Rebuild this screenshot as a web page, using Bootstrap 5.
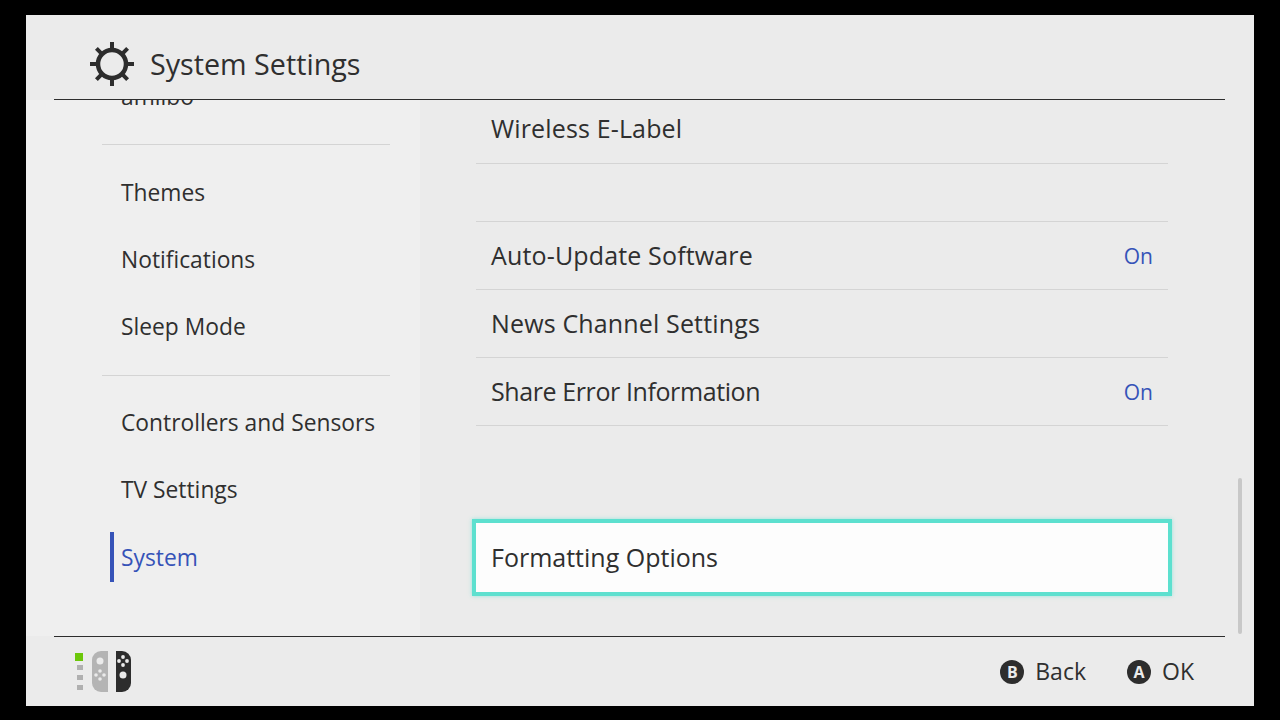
<!DOCTYPE html>
<html lang="en">
<head>
    <meta charset="UTF-8">
    <meta name="viewport" content="width=device-width, initial-scale=1.0">
    <title>System Settings</title>
    <link href="https://cdn.jsdelivr.net/npm/bootstrap@5.3.0/dist/css/bootstrap.min.css" rel="stylesheet">
    <style>
        html, body { height: 100%; }
        body {
            background-color: #000;
            padding: 15px 26px 14px;
            overflow: hidden;
            font-family: "Open Sans", "Noto Sans", sans-serif;
            color: #2f2f2f;
        }
        .screen { height: 691px; background-color: #ebebeb; position: relative; overflow: hidden; }
        .top-bar { height: 85px; margin: 0 29px 0 28px; padding: 14px 0 0 35px; border-bottom: 1px solid #2d2d2d; gap: 15px; }
        .top-title { font-size: 28.7px; }
        .main-area { height: 536px; }
        .side-col { width: 394px; background-color: #efefef; padding: 0 30px 0 76px; overflow: hidden; }
        .side-list { margin-top: -37px; }
        .side-item { height: 67px; padding: 2px 0 0 19px; font-size: 22.8px; position: relative; }
        .side-sep { border-top: 1px solid #d4d4d4; margin: 14px 0; }
        .side-sep.is-lower { margin: 15px 0 13px; }
        .side-item.is-active { color: #3653b8; padding-top: 4px; }
        .side-item.is-active::before {
            content: "";
            position: absolute;
            left: 8px;
            top: 9px;
            width: 4px;
            height: 50px;
            background-color: #3653b8;
        }
        .content-col { padding: 0 86px 0 56px; width: 834px; overflow: hidden; }
        .content-list { margin-top: -5px; }
        .set-row { height: 68px; padding: 0 15px; font-size: 25px; letter-spacing: .15px; border-bottom: 1px solid #d4d4d4; }
        .set-row.is-first { height: 69px; padding-bottom: 1px; }
        .set-row .is-tight { letter-spacing: -.4px; }
        .set-gap { height: 58px; border-bottom: 1px solid #d4d4d4; }
        .set-value { color: #3653b8; font-size: 21px; letter-spacing: 0; padding-top: 2px; }
        .focus-row {
            height: 77px;
            margin: 93px -4px 0;
            padding: 0 15px;
            font-size: 25px;
            background-color: #fdfdfd;
            border: 4px solid #5de0cf;
            box-shadow: 0 0 4px rgba(93, 224, 207, 0.6);
        }
        .scroll-thumb { position: absolute; left: 1212px; top: 463px; width: 4px; height: 156px; background-color: #c8c8c8; border-radius: 2px; }
        .bottom-bar { height: 70px; margin: 0 29px 0 28px; padding: 0 31px 0 20px; border-top: 1px solid #2d2d2d; font-size: 23px; }
        .btn-hint { gap: 11px; margin-left: 41px; }
        .round-key {
            width: 24px;
            height: 24px;
            border-radius: 50%;
            background-color: #2d2d2d;
            color: #ebebeb;
            font-size: 16px;
            font-weight: 700;
        }
    </style>
</head>
<body>
    <div class="screen d-flex flex-column">
        <!-- Header -->
        <div class="top-bar d-flex align-items-center">
            <svg width="46" height="46" viewBox="0 0 46 46">
                <circle cx="23" cy="23" r="14" fill="none" stroke="#2d2d2d" stroke-width="4.5"/>
                <g stroke="#2d2d2d" stroke-width="4">
                    <path d="M23 1V10M23 36V45M1 23H10M36 23H45"/>
                    <path d="M7.4 7.4L13.8 13.8M32.2 32.2L38.6 38.6M7.4 38.6L13.8 32.2M32.2 13.8L38.6 7.4"/>
                </g>
            </svg>
            <div class="top-title">System Settings</div>
        </div>

        <div class="main-area d-flex">
            <!-- Sidebar -->
            <div class="side-col">
                <div class="side-list">
                    <div class="side-item d-flex align-items-center">amiibo</div>
                    <div class="side-sep"></div>
                    <div class="side-item d-flex align-items-center">Themes</div>
                    <div class="side-item d-flex align-items-center">Notifications</div>
                    <div class="side-item d-flex align-items-center">Sleep Mode</div>
                    <div class="side-sep is-lower"></div>
                    <div class="side-item d-flex align-items-center">Controllers and Sensors</div>
                    <div class="side-item d-flex align-items-center">TV Settings</div>
                    <div class="side-item d-flex align-items-center is-active">System</div>
                </div>
            </div>

            <!-- Settings list -->
            <div class="content-col">
                <div class="content-list">
                    <div class="set-row is-first d-flex align-items-center">Wireless E-Label</div>
                    <div class="set-gap"></div>
                    <div class="set-row d-flex align-items-center justify-content-between"><span>Auto-Update Software</span><span class="set-value">On</span></div>
                    <div class="set-row d-flex align-items-center">News Channel Settings</div>
                    <div class="set-row d-flex align-items-center justify-content-between"><span class="is-tight">Share Error Information</span><span class="set-value">On</span></div>
                    <div class="focus-row d-flex align-items-center">Formatting Options</div>
                </div>
            </div>
        </div>
        <div class="scroll-thumb"></div>

        <!-- Footer -->
        <div class="bottom-bar d-flex align-items-center justify-content-between">
            <svg width="60" height="44" viewBox="0 0 60 44">
                <rect x="1" y="3" width="8" height="8" fill="#6cc70a"/>
                <rect x="3" y="15" width="6" height="5" fill="#b0b0b0"/>
                <rect x="3" y="25" width="6" height="5" fill="#b0b0b0"/>
                <rect x="3" y="35" width="6" height="5" fill="#b0b0b0"/>
                <path d="M34 1V42H27A9 9 0 0 1 18 33V10A9 9 0 0 1 27 1Z" fill="#b4b4b4"/>
                <circle cx="26" cy="11" r="3.5" fill="#ebebeb"/>
                <g fill="#ebebeb">
                    <circle cx="26" cy="21" r="1.8"/><circle cx="26" cy="29" r="1.8"/>
                    <circle cx="22" cy="25" r="1.8"/><circle cx="30" cy="25" r="1.8"/>
                </g>
                <path d="M42 1V42H48A9 9 0 0 0 57 33V10A9 9 0 0 0 48 1Z" fill="#2d2d2d"/>
                <g fill="#ebebeb">
                    <circle cx="49" cy="7" r="1.9"/><circle cx="49" cy="15" r="1.9"/>
                    <circle cx="45" cy="11" r="1.9"/><circle cx="53" cy="11" r="1.9"/>
                </g>
                <circle cx="49" cy="25" r="3.5" fill="#ebebeb"/>
            </svg>
            <div class="d-flex align-items-center">
                <div class="btn-hint d-flex align-items-center">
                    <span class="round-key d-flex align-items-center justify-content-center">B</span><span>Back</span>
                </div>
                <div class="btn-hint d-flex align-items-center">
                    <span class="round-key d-flex align-items-center justify-content-center">A</span><span>OK</span>
                </div>
            </div>
        </div>
    </div>
    <script src="https://cdn.jsdelivr.net/npm/bootstrap@5.3.0/dist/js/bootstrap.bundle.min.js"></script>
</body>
</html>
